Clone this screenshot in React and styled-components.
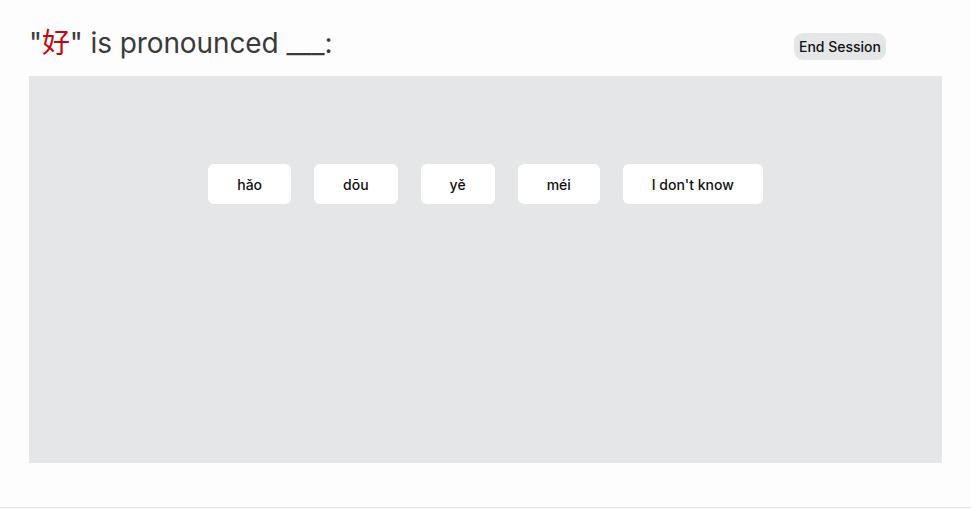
import React from 'react';
import styled, { createGlobalStyle } from 'styled-components';

const GlobalStyle = createGlobalStyle`
  html, body {
    margin: 0;
    padding: 0;
    background: #fdfdfd;
    font-family: Inter, "Noto Sans", "Noto Sans CJK SC", sans-serif;
  }
`;

const choices = ['hǎo', 'dōu', 'yě', 'méi', "I don't know"];

function App() {
  return (
    <Page>
      <GlobalStyle />
      <Header>
        <Title>
          "<Hanzi>好</Hanzi>" is pronounced ___:
        </Title>
        <EndButton>End Session</EndButton>
      </Header>
      <Board>
        <Choices>
          {choices.map((c) => (
            <Choice key={c}>{c}</Choice>
          ))}
        </Choices>
      </Board>
    </Page>
  );
}

export default App;

const Page = styled.div`
  width: 971px;
  height: 508px;
  border-bottom: 1px solid #e4e4e4;
  padding: 0 29px;
  box-sizing: border-box;
`;

const Header = styled.div`
  display: flex;
  justify-content: space-between;
  align-items: center;
  height: 76px;
  padding-right: 56px;
`;

const Title = styled.h1`
  margin: 0;
  padding-top: 6px;
  font-size: 28px;
  font-weight: 400;
  color: #3a3a3a;
  letter-spacing: -0.1px;
`;

const Hanzi = styled.span`
  color: #c4060f;
  font-family: "Noto Sans CJK SC", sans-serif;
`;

const EndButton = styled.button`
  margin-top: 17px;
  height: 27px;
  padding: 0 5px;
  border: none;
  border-radius: 9px;
  background: #e5e6e8;
  color: #111;
  font-family: Inter, "Noto Sans", sans-serif;
  font-size: 14px;
  font-weight: 500;
`;

const Board = styled.div`
  height: 387px;
  background: #e5e6e8;
  display: flex;
  justify-content: center;
  padding-top: 88px;
  box-sizing: border-box;
`;

const Choices = styled.div`
  display: flex;
  gap: 23px;
  height: 40px;
`;

const Choice = styled.button`
  height: 40px;
  padding: 0 29px;
  border: none;
  border-radius: 6px;
  background: #fff;
  color: #111;
  font-family: Inter, "Noto Sans", sans-serif;
  font-size: 14px;
  font-weight: 500;
`;
